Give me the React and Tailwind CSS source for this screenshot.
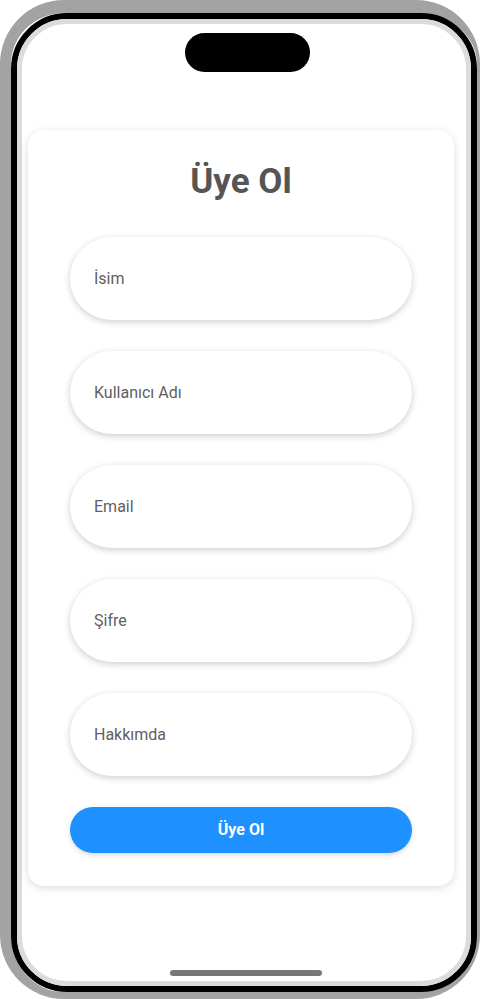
import React, { useState } from "react";

const fields = [
  { name: "name", placeholder: "İsim", type: "text" },
  { name: "username", placeholder: "Kullanıcı Adı", type: "text" },
  { name: "email", placeholder: "Email", type: "email" },
  { name: "password", placeholder: "Şifre", type: "password" },
  { name: "about", placeholder: "Hakkımda", type: "text" },
];

const RegisterScreen = () => {
  const [form, setForm] = useState({
    name: "",
    username: "",
    email: "",
    password: "",
    about: "",
  });

  // Update a single field
  const handleChange = (e) => {
    setForm({ ...form, [e.target.name]: e.target.value });
  };

  return (
    <div className="w-[426px] ml-[6px] mt-[58px] bg-white rounded-[16px] shadow-[0_2px_8px_rgba(0,0,0,0.14)] px-[42px] pt-[31px] pb-[33px]">
      <h1 className="text-center text-[35px] leading-[42px] font-bold text-[#555555]">Üye Ol</h1>

      <div className="mt-[34px] flex flex-col gap-[31px]">
        {fields.map((f) => (
          <input
            key={f.name}
            name={f.name}
            type={f.type}
            value={form[f.name]}
            onChange={handleChange}
            placeholder={f.placeholder}
            className="h-[83px] w-full rounded-full bg-white pl-6 text-[16px] text-[#555555] placeholder:text-[#5f5f5f] shadow-[0_2px_7px_rgba(0,0,0,0.2)] outline-none"
          />
        ))}

        <button className="h-[46px] w-full rounded-full bg-[#1e90ff] text-white text-[16px] font-bold shadow-[0_2px_5px_rgba(0,0,0,0.15)]">
          Üye Ol
        </button>
      </div>
    </div>
  );
};

export default function App() {
  return (
    <div className="min-h-screen bg-white font-['Roboto',sans-serif]">
      {/* phone frame */}
      <div className="h-[999px] rounded-[64px] border-[#a3a3a3] border-l-[11px] border-r-[3px] border-t-[13px] border-b-[7px]">
        <div className="h-full rounded-[56px] border-[6px] border-black">
          <div className="h-full rounded-[50px] border-[5px] border-[#dcdcdc] bg-white flex flex-col">
            <div className="ml-[163px] mt-[9px] h-[39px] w-[125px] rounded-full bg-black" />

            <RegisterScreen />

            <div className="mt-auto mb-[5px] ml-[148px] h-[6px] w-[152px] rounded-full bg-[#777777]" />
          </div>
        </div>
      </div>
    </div>
  );
}
